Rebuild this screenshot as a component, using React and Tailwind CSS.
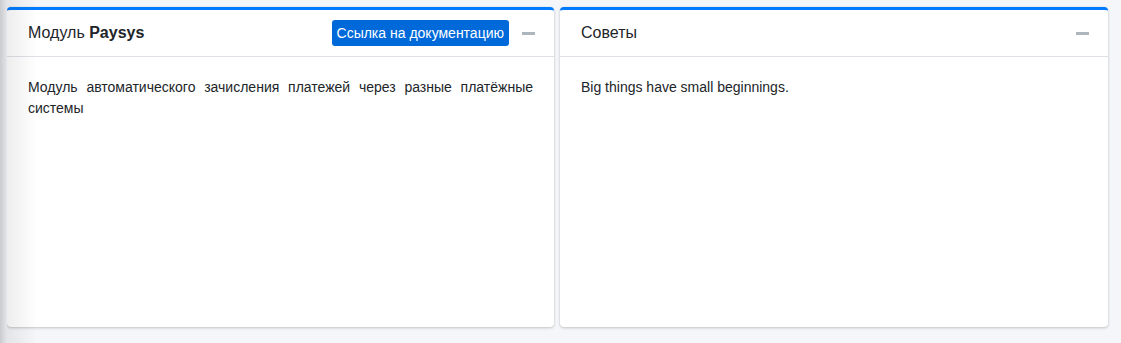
import React from "react";

function MinusButton() {
  return (
    <button type="button" className="flex h-[26px] w-[29px] items-center justify-center">
      <span className="block h-[3px] w-[13px] bg-[#adb5bd]" />
    </button>
  );
}

function Card({ title, tools, width, children }) {
  return (
    <div className={`flex flex-col rounded-[4px] border-t-[3px] border-[#007bff] bg-white shadow-[0_0_1px_rgba(0,0,0,0.125),0_1px_3px_rgba(0,0,0,0.2)] ${width}`}>
      <div className="flex h-[47px] items-center justify-between border-b border-[#dee2e6] pl-[21px] pr-[11px]">
        <h3 className="text-[16px] leading-[22px] text-[#212529]">{title}</h3>
        <div className="flex items-center gap-[5px]">
          {tools}
          <MinusButton />
        </div>
      </div>
      <div className="px-[21px] py-[20px] text-[14px] leading-[21px] text-[#212529]">{children}</div>
    </div>
  );
}

export default function App() {
  return (
    <div className="relative h-[343px] w-[1121px] overflow-hidden bg-[#f4f6f9] font-['Liberation_Sans',Arial,sans-serif]">
      <div className="flex h-[327px] gap-[6px] pl-[7px] pt-[7px]">
        <Card
          width="w-[547px]"
          title={
            <>
              Модуль <b className="font-bold">Paysys</b>
            </>
          }
          tools={
            <a
              href="#"
              className="rounded-[3px] bg-[#0069d9] px-[5px] py-[3px] text-[14px] leading-[20px] text-white"
            >
              Ссылка на документацию
            </a>
          }
        >
          <p className="text-justify">
            Модуль автоматического зачисления платежей через разные платёжные системы
          </p>
        </Card>
        <Card width="w-[548px]" title="Советы">
          <p>Big things have small beginnings.</p>
        </Card>
      </div>
      {/* sidebar shadow over the left edge */}
      <div className="pointer-events-none absolute inset-y-0 left-0 w-[7px] bg-gradient-to-r from-[#c9cbcf] to-[#e4e6ea]" />
      <div className="pointer-events-none absolute inset-y-0 left-[7px] w-[30px] bg-gradient-to-r from-[rgba(0,0,0,0.07)] to-transparent" />
    </div>
  );
}
